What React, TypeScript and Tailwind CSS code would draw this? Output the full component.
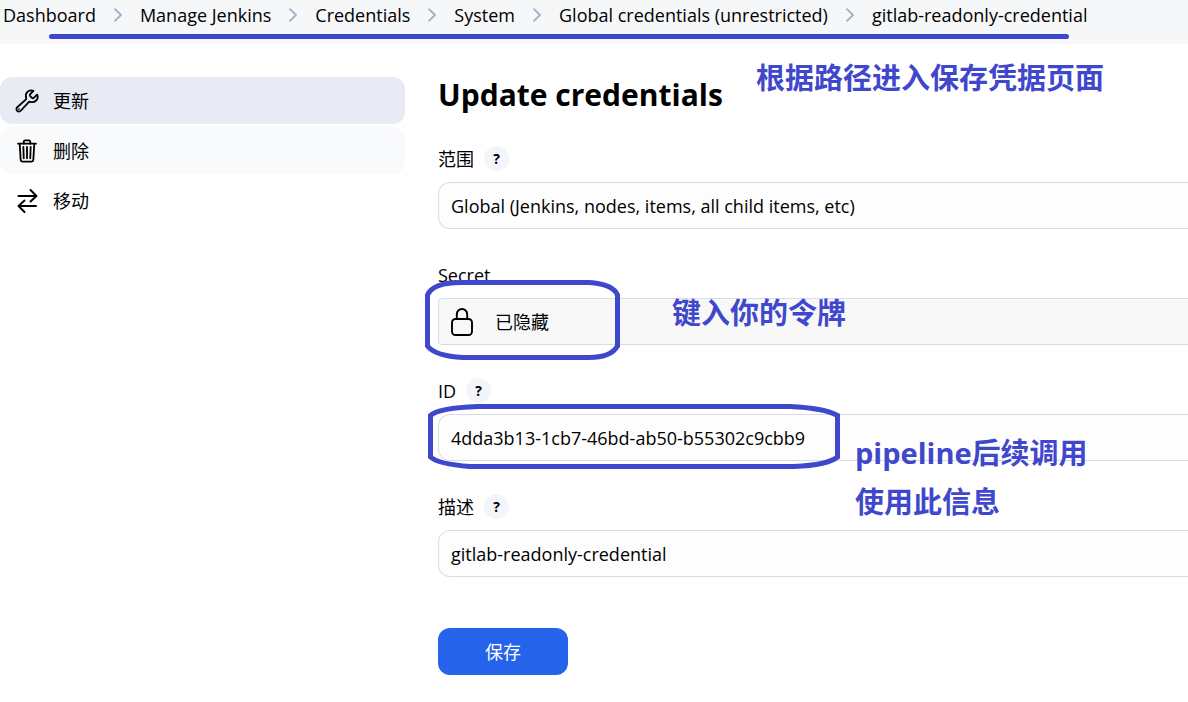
import React, { useState } from "react";

const crumbs = [
  "Dashboard",
  "Manage Jenkins",
  "Credentials",
  "System",
  "Global credentials (unrestricted)",
  "gitlab-readonly-credential",
];

const fieldClass =
  "block h-[47px] w-full appearance-none rounded-l-xl border border-r-0 border-[#d7dce9] bg-[#fdfdfd] px-3 text-lg text-black outline-none";

const noteClass = "pointer-events-none absolute whitespace-nowrap text-[29px] font-bold text-[#3f48cc]";

function WrenchIcon() {
  return (
    <svg viewBox="0 0 512 512" className="size-[26px]" fill="none" stroke="currentColor" strokeWidth="36" strokeLinecap="round" strokeLinejoin="round">
      <path d="M393.87 190a32.1 32.1 0 01-45.25 0l-26.57-26.57a32.09 32.09 0 010-45.26L382.19 58a1 1 0 00-.3-1.64c-38.82-16.64-89.15-8.16-121.11 23.57-30.58 30.35-32.32 76-21.12 115.84a31.93 31.93 0 01-9.06 32.08L64 380a48.17 48.17 0 1068 68l153.86-167a31.93 31.93 0 0131.6-9.13c39.54 10.59 84.54 8.6 114.72-21.19 32.49-32 39.5-88.56 23.75-120.93a1 1 0 00-1.6-.26z" />
      <circle cx="96" cy="416" r="8" strokeWidth="16" />
    </svg>
  );
}

function TrashIcon() {
  return (
    <svg viewBox="0 0 512 512" className="size-[26px]" fill="none" stroke="currentColor" strokeWidth="36" strokeLinecap="round" strokeLinejoin="round">
      <path d="M112 112l20 320c.95 18.49 14.4 32 32 32h184c17.67 0 30.87-13.51 32-32l20-320M80 112h352" />
      <path d="M192 112V72a23.93 23.93 0 0124-24h80a23.93 23.93 0 0124 24v40M256 176v224M184 176l8 224M328 176l-8 224" />
    </svg>
  );
}

function MoveIcon() {
  return (
    <svg viewBox="0 0 26 26" className="size-[26px]" fill="none" stroke="currentColor" strokeWidth="2" strokeLinecap="round" strokeLinejoin="round">
      <path d="M4.5 8h17.7M16.5 2l6 6-6 5.5M22 18H4.8M10.5 12.5l-6 5.5 6 6" />
    </svg>
  );
}

function LockIcon() {
  return (
    <svg viewBox="0 0 22 28" className="h-7 w-[22px]" fill="none" stroke="currentColor" strokeWidth="1.9" strokeLinecap="round" strokeLinejoin="round">
      <path d="M5.8 11V6.2a5.2 5.2 0 0110.4 0V11" />
      <rect x="1" y="11" width="20" height="16" rx="3.5" />
    </svg>
  );
}

function Chevron() {
  return (
    <svg viewBox="0 0 8 14" className="h-3.5 w-2 shrink-0" fill="none" stroke="#a3aecb" strokeWidth="1.8" strokeLinecap="round" strokeLinejoin="round">
      <path d="M1 1.2L7 7l-6 5.8" />
    </svg>
  );
}

const tasks = [
  { label: "更新", icon: <WrenchIcon />, style: "bg-[#e8ebf3]" },
  { label: "删除", icon: <TrashIcon />, style: "bg-[#f9fafc]" },
  { label: "移动", icon: <MoveIcon />, style: "" },
];

function Field({ id, label, help = true, children }: { id: string; label: string; help?: boolean; children: React.ReactNode }) {
  return (
    <div>
      <div className="mb-[11px] flex h-[25px] items-center gap-2.5">
        <label htmlFor={id}>{label}</label>
        {help && (
          <button type="button" className="size-[25px] rounded-full bg-[#f3f5fa] text-sm font-bold leading-[25px]">
            ?
          </button>
        )}
      </div>
      <div className="relative">{children}</div>
    </div>
  );
}

export default function App() {
  const [form, setForm] = useState({
    scope: "global",
    id: "4dda3b13-1cb7-46bd-ab50-b55302c9cbb9",
    description: "gitlab-readonly-credential",
  });

  function handleChange(e: React.ChangeEvent<HTMLInputElement | HTMLSelectElement>) {
    setForm((p) => ({ ...p, [e.target.name]: e.target.value }));
  }

  return (
    <div className="min-h-screen overflow-hidden bg-white font-['Open_Sans','Noto_Sans_CJK_SC',sans-serif] text-lg text-black">
      <header className="relative h-11 bg-[#f6f7f9] pl-[3px] pt-px">
        <nav>
          <ol className="flex items-center whitespace-nowrap">
            {crumbs.map((c, i) => (
              <li key={c} className="flex items-center">
                {i > 0 && (
                  <span className="px-[18px]">
                    <Chevron />
                  </span>
                )}
                <a href="#">{c}</a>
              </li>
            ))}
          </ol>
        </nav>
        <div className="absolute left-[49px] top-[34px] h-[5px] w-[1020px] rounded-sm bg-[#3f48cc]" />
      </header>

      <div className="flex gap-[33px] pt-[33px]">
        <aside className="w-[405px] shrink-0">
          <nav className="flex flex-col gap-[3px]">
            {tasks.map((t) => (
              <a key={t.label} href="#" className={`flex h-[47px] items-center gap-[13px] rounded-xl pl-3.5 ${t.style}`}>
                {t.icon}
                {t.label}
              </a>
            ))}
          </nav>
        </aside>

        <main className="relative min-w-0 flex-1">
          <h1 className="mb-[33px] text-[30px] font-bold leading-9">Update credentials</h1>
          <p className={`${noteClass} left-[318px] -top-[22px]`}>根据路径进入保存凭据页面</p>

          <form className="flex flex-col gap-[33px]" onSubmit={(e) => e.preventDefault()}>
            <Field id="scope" label="范围">
              <select id="scope" name="scope" value={form.scope} onChange={handleChange} className={fieldClass}>
                <option value="global">Global (Jenkins, nodes, items, all child items, etc)</option>
                <option value="system">System (Jenkins and nodes only)</option>
              </select>
            </Field>

            <Field id="secret" label="Secret" help={false}>
              <div className="flex h-[47px] items-center gap-[22px] rounded-l-sm border border-r-0 border-[#d7dce9] bg-[#f8f8f8] px-3">
                <LockIcon />
                <output id="secret">已隐藏</output>
              </div>
              <svg viewBox="0 0 195 80" className="pointer-events-none absolute -left-[13px] -top-[18px] h-20 w-[195px]" fill="none" stroke="#3f48cc" strokeWidth="5">
                <path d="M2.5 15Q8 2.5 36 2.5H164Q188 4 192.5 15V66Q186 77.5 164 77.5H38Q10 76 2.5 66Z" />
              </svg>
              <p className={`${noteClass} left-[234px] -top-2`}>键入你的令牌</p>
            </Field>

            <Field id="id" label="ID">
              <input id="id" name="id" value={form.id} onChange={handleChange} className={fieldClass} />
              <svg viewBox="0 0 412 65" className="pointer-events-none absolute -left-2.5 -top-2.5 h-[65px] w-[412px]" fill="none" stroke="#3f48cc" strokeWidth="5">
                <path d="M2.5 11.5Q10 4 50 2.5H362Q396 4 409.5 11.5V53Q400 61 366 62.5H42Q10 60 2.5 53Z" />
              </svg>
              <p className={`${noteClass} left-[417px] top-3.5 leading-[49px]`}>
                pipeline后续调用
                <br />
                使用此信息
              </p>
            </Field>

            <Field id="description" label="描述">
              <input id="description" name="description" value={form.description} onChange={handleChange} className={fieldClass} />
            </Field>

            <button type="submit" className="mt-[18px] h-[47px] w-[130px] rounded-xl bg-[#2563eb] text-white">
              保存
            </button>
          </form>
        </main>
      </div>
    </div>
  );
}
